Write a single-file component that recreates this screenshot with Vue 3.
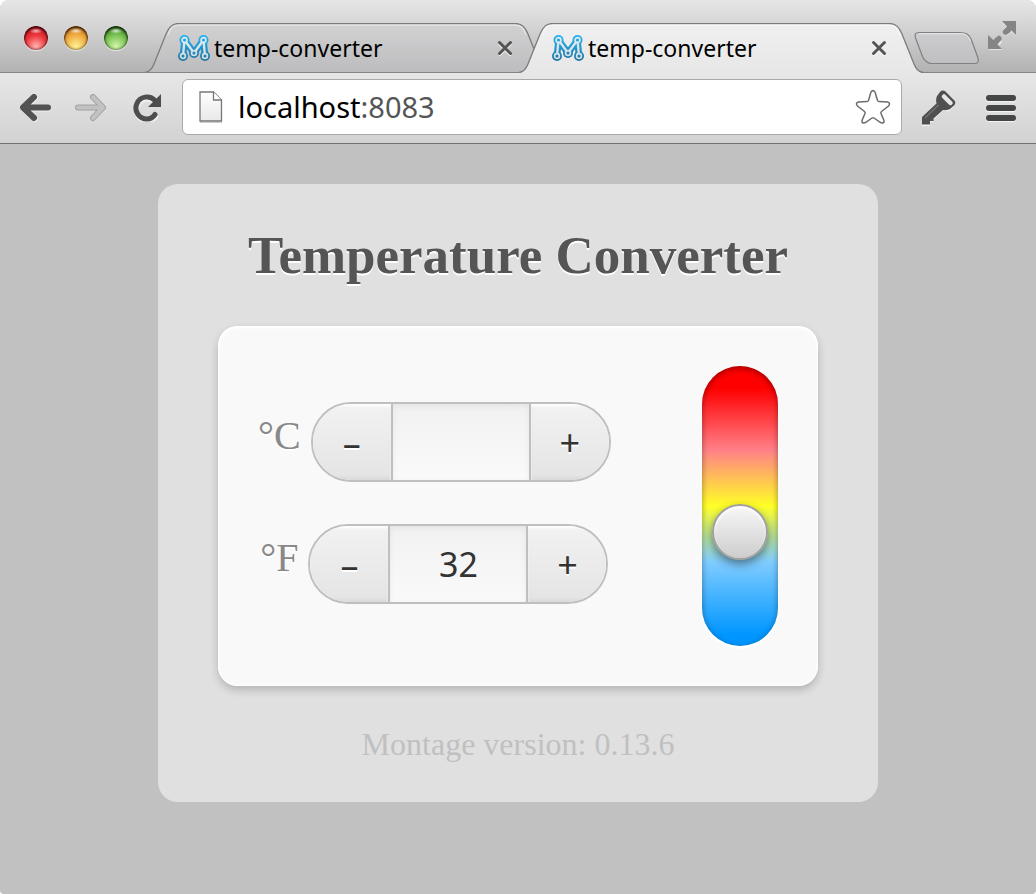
<script setup>
import { computed, ref } from 'vue'

const tabs = ref([
  { id: 1, title: 'temp-converter', active: false },
  { id: 2, title: 'temp-converter', active: true },
])
const address = { host: 'localhost', port: ':8083' }

const fahrenheit = ref(32)
const celsius = computed(() => Math.round(((fahrenheit.value - 32) * 5) / 9))

function setFahrenheit(value) {
  fahrenheit.value = Math.round(Number(value) || 0)
}
function setCelsius(value) {
  setFahrenheit(((Number(value) || 0) * 9) / 5 + 32)
}
function select(id) {
  tabs.value.forEach((tab) => (tab.active = tab.id === id))
}

const fields = computed(() => [
  { id: 'celsius', label: '°C', value: celsius.value || '', number: celsius.value, set: setCelsius },
  { id: 'fahrenheit', label: '°F', value: fahrenheit.value, number: fahrenheit.value, set: setFahrenheit },
])
</script>

<template>
  <div class="window">
    <header class="titlebar">
      <div class="lights">
        <button class="light red" aria-label="Close window"></button>
        <button class="light amber" aria-label="Minimize window"></button>
        <button class="light green" aria-label="Zoom window"></button>
      </div>
      <nav class="tabs">
        <div v-for="tab in tabs" :key="tab.id" class="tab" :class="{ active: tab.active }">
          <svg class="tab-shape" viewBox="0 0 404 50" preserveAspectRatio="none" aria-hidden="true">
            <defs>
              <linearGradient :id="'tabfill' + tab.id" x1="0" y1="0" x2="0" y2="1">
                <stop offset="0" :stop-color="tab.active ? '#f0f0f0' : '#d2d2d3'" />
                <stop offset="1" :stop-color="tab.active ? '#e7e7e7' : '#bcbcbe'" />
              </linearGradient>
            </defs>
            <path
              d="M0 50C5 49 7 46 9 41L21 11C24 4 27 .5 34 .5H370C377 .5 380 4 383 11L395 41C397 46 399 49 404 50Z"
              :fill="`url(#tabfill${tab.id})`"
            />
            <path
              d="M0 49.5C5 49 7 46 9 41L21 11C24 4 27 .5 34 .5H370C377 .5 380 4 383 11L395 41C397 46 399 49 404 49.5"
              fill="none" stroke="#7c7c7c" stroke-width="1.3"
            />
            <path d="M23 12C26 5 28 2 34 2H370C376 2 378 5 381 12" fill="none" stroke="#fff" stroke-opacity=".65" />
            <path v-if="!tab.active" d="M0 49.5H404" stroke="#858585" />
          </svg>
          <button class="tab-title" @click="select(tab.id)">
            <svg class="favicon" viewBox="0 0 32 26" aria-hidden="true">
              <defs>
                <linearGradient :id="'logo' + tab.id" x1="0" y1="0" x2="0" y2="26" gradientUnits="userSpaceOnUse">
                  <stop offset="0" stop-color="#25b4f2" />
                  <stop offset="1" stop-color="#20739f" />
                </linearGradient>
                <linearGradient :id="'gap' + tab.id" x1="0" y1="0" x2="0" y2="26" gradientUnits="userSpaceOnUse">
                  <stop offset="0" stop-color="#e0ecf2" />
                  <stop offset="1" stop-color="#cfdde4" />
                </linearGradient>
              </defs>
              <g :stroke="`url(#logo${tab.id})`" :fill="`url(#logo${tab.id})`" stroke-linejoin="round">
                <path d="M5 21L6.500 5L16 18L25.500 5L27 21" fill="none" stroke-width="6.600" />
                <g stroke="none">
                  <circle cx="5" cy="21" r="5" /><circle cx="6.500" cy="5" r="5" /><circle cx="16" cy="18" r="5" />
                  <circle cx="25.500" cy="5" r="5" /><circle cx="27" cy="21" r="5" />
                </g>
              </g>
              <g :stroke="`url(#gap${tab.id})`" fill="none">
                <path d="M5 21L6.500 5L16 18L25.500 5L27 21" stroke-width="2.400" />
                <g :fill="`url(#logo${tab.id})`" stroke-width="1.700">
                  <circle cx="5" cy="21" r="2.400" /><circle cx="6.500" cy="5" r="2.400" /><circle cx="16" cy="18" r="2.400" />
                  <circle cx="25.500" cy="5" r="2.400" /><circle cx="27" cy="21" r="2.400" />
                </g>
              </g>
            </svg>
            <span>{{ tab.title }}</span>
          </button>
          <button class="tab-close" aria-label="Close tab">
            <svg viewBox="0 0 16 16" width="16" height="16">
              <path d="M3 4.500L13 14.500M13 4.500L3 14.500" stroke="#fff" stroke-opacity=".7" stroke-width="3" stroke-linecap="round" />
              <path d="M2.500 2.500L13.500 13.500M13.500 2.500L2.500 13.500" stroke="#555" stroke-width="3" stroke-linecap="round" />
            </svg>
          </button>
        </div>
        <button class="new-tab" aria-label="New tab">
          <svg viewBox="0 0 66 34" width="66" height="34">
            <defs>
              <linearGradient id="newfill" x1="0" y1="0" x2="0" y2="1">
                <stop offset="0" stop-color="#cdcdcf" /><stop offset="1" stop-color="#bfbfc1" />
              </linearGradient>
            </defs>
            <path d="M5 1.500H46C52 1.500 55 3 57.500 9L64 27C65 31 64 32.500 60 32.500H18C13 32.500 10.500 30 8.500 25.500L1.500 7C.5 3 1 1.500 5 1.500Z" fill="url(#newfill)" stroke="#818181" stroke-width="1.200" />
            <path d="M5 2.700H46C51 2.700 54 4 56.500 10" fill="none" stroke="#e8e8e8" />
          </svg>
        </button>
      </nav>
      <button class="fullscreen" aria-label="Enter full screen">
        <svg viewBox="0 0 28 29" width="28" height="29">
          <path d="M1 15V29H14.500L10.500 24.500Q14.500 23 14 18Q11 14 6.500 19.500ZM14 1H28V15L23.500 11Q20 16 15.500 13Q13 9 18 5.500Z" fill="#e4e4e4" />
          <path d="M0 14V28H14L9.500 23.500Q11 21 13.500 19Q14.500 15.500 11 14.500Q9 15 5.500 19ZM14 0H28V14L23.500 9.500Q21 13 18 14Q13.500 13 15 9.500Q16.500 8 19 5.500Z" fill="#858585" />
        </svg>
      </button>
    </header>

    <div class="toolbar">
      <button class="tool back" aria-label="Back">
        <svg viewBox="0 0 32 28" width="32" height="28">
          <path d="M14.500 4L3.500 14.500L14.500 25M4 14.500H28" class="glow" />
          <path d="M14 3L3 13.500L14 24M4 13.500H28" class="arrow" />
        </svg>
      </button>
      <button class="tool forward" aria-label="Forward" disabled>
        <svg viewBox="0 0 32 28" width="32" height="28">
          <path d="M18 3L28 13.500L18 24M3 13.500H27" class="arrow rim" />
          <path d="M18 3L28 13.500L18 24M3 13.500H27" class="arrow pale" />
        </svg>
      </button>
      <button class="tool reload" aria-label="Reload">
        <svg viewBox="0 0 30 28" width="30" height="28">
          <path d="M22.500 22Q19 26 14 26A11 11 0 1 1 22 7" transform="translate(0 1)" class="ring light-ring" />
          <path d="M22 20.500Q19 25 14 25A11 11 0 1 1 22 6.500" class="ring" />
          <path d="M28 0V13H15Z" fill="#4d4d4d" />
        </svg>
      </button>
      <div class="address">
        <svg class="page-icon" viewBox="0 0 24 32" width="24" height="32" aria-hidden="true">
          <defs>
            <linearGradient id="sheet" x1="0" y1="0" x2="0" y2="1">
              <stop offset="0" stop-color="#fff" /><stop offset="1" stop-color="#e8e8e8" />
            </linearGradient>
          </defs>
          <path d="M1 31.500H23" stroke="#ccc" />
          <path d="M1 1H14.500L22.500 9V30H1Z" fill="url(#sheet)" stroke="#777" stroke-width="1.300" />
          <path d="M14.500 1V9H22.500" fill="#fff" stroke="#777" stroke-width="1.300" />
        </svg>
        <a class="url" href="#">{{ address.host }}<span>{{ address.port }}</span></a>
        <button class="star" aria-label="Bookmark this page">
          <svg viewBox="0 0 36 36" width="36" height="36">
            <path d="M15.800 3.500Q18 -.5 20.200 3.500L22.500 11.500Q23 12.500 24 12.500L32.500 13Q36 14 33.500 17L26.500 22.500Q25.500 23.300 26 24.500L29 31.500Q29.500 35 25.500 33.500L19 29Q18 28.300 17 29L10.500 33.500Q6.500 35 7 31.500L10 24.500Q10.500 23.300 9.500 22.500L2.500 17Q0 14 3.500 13L12 12.500Q13 12.500 13.500 11.500Z" fill="#fff" stroke="#6c6c6c" stroke-width="1.500" />
          </svg>
        </button>
      </div>
      <button class="tool key" aria-label="Passwords">
        <svg viewBox="0 0 36 36" width="36" height="36">
          <path d="M20 3Q22 0 25 2L34 10Q36 13 33 16L29 20.500Q27 22 22 20.500L12 30V32H9V36H1V28L16 14Q14.500 10 17 7Z" fill="#f2f2f2" />
          <path d="M19 2Q21.500 -.5 24.500 1.500L33.500 10.500Q35.500 13 33 15.500L29 19Q27 20.500 22 20L12.500 28.500V31H9V34.500H1V27L15.500 13.500Q14.500 9 16 6Z" fill="#505050" />
          <path d="M23 6.500L29.500 13" stroke="#e6e6e6" stroke-width="4.500" stroke-linecap="round" />
          <path d="M4 28L17.500 15" stroke="#757575" stroke-width="1.200" />
        </svg>
      </button>
      <button class="tool menu" aria-label="Menu">
        <span></span><span></span><span></span>
      </button>
    </div>

    <main class="page">
      <section class="panel">
        <h1>Temperature Converter</h1>
        <div class="card">
          <div class="fields">
            <div v-for="field in fields" :key="field.id" class="field">
              <label :for="field.id">{{ field.label }}</label>
              <div class="stepper">
                <button :aria-label="'Decrease ' + field.label" @click="field.set(field.number - 1)">–</button>
                <input :id="field.id" type="text" inputmode="numeric" :value="field.value" @change="field.set($event.target.value)" />
                <button :aria-label="'Increase ' + field.label" @click="field.set(field.number + 1)">+</button>
              </div>
            </div>
          </div>
          <input v-model.number="fahrenheit" class="thermometer" type="range" min="-40" max="154" aria-label="Temperature" />
        </div>
        <p class="version">Montage version: 0.13.6</p>
      </section>
    </main>
  </div>
</template>

<style>
body {
  background: #fff;
}
</style>

<style scoped>
.window {
  min-height: 100vh;
  display: flex;
  flex-direction: column;
  overflow: hidden;
  border-radius: 9px 9px 4px 4px;
  background: #c1c1c1;
  font-family: "Noto Sans", "Open Sans", sans-serif;
}
button {
  padding: 0;
  border: 0;
  background: none;
  color: inherit;
  font: inherit;
}
svg {
  display: block;
}
.titlebar {
  display: flex;
  height: 72px;
  border-bottom: 1px solid #858585;
  background: linear-gradient(#e6e6e6, #dadada 25%, #b2b2b2);
}
.lights {
  display: flex;
  gap: 16px;
  padding: 26px 17px 0 24px;
}
.light {
  width: 24px;
  height: 24px;
  border-radius: 50%;
  box-shadow: inset 0 2px 3px rgba(0, 0, 0, 0.65), inset 0 0 2px 1px rgba(0, 0, 0, 0.4), 0 1px 1px #e8e8e8;
}
.red {
  background: radial-gradient(ellipse 7px 3px at 50% 20%, rgba(255, 255, 255, 0.7), transparent), radial-gradient(circle at 50% 85%, #ffb3b0, #ee3b3f 45%, #cf1722 75%);
}
.amber {
  background: radial-gradient(ellipse 7px 3px at 50% 20%, rgba(255, 255, 255, 0.8), transparent), radial-gradient(circle at 50% 85%, #fff294, #efaa40 50%, #d17b17 80%);
}
.green {
  background: radial-gradient(ellipse 7px 3px at 50% 20%, rgba(255, 255, 255, 0.8), transparent), radial-gradient(circle at 50% 85%, #d3f7aa, #76c150 50%, #3f8a25 80%);
}
.tabs {
  flex: 1;
  display: flex;
  align-items: flex-end;
  min-width: 0;
}
.tab {
  position: relative;
  flex: 0 1 404px;
  min-width: 0;
  height: 50px;
  margin-bottom: -1px;
  display: flex;
  align-items: center;
  justify-content: space-between;
}
.tab + .tab {
  margin-left: -30px;
}
.tab.active {
  z-index: 1;
}
.tab-shape {
  position: absolute;
  inset: 0;
  width: 100%;
  height: 100%;
}
.tab-title {
  position: relative;
  display: flex;
  align-items: center;
  gap: 4px;
  padding-left: 33px;
  color: #000;
  font-size: 23px;
  line-height: 32px;
  white-space: nowrap;
}
.favicon {
  width: 32px;
  height: 26px;
}
.tab-close {
  position: relative;
  margin-right: 36px;
}
.new-tab {
  flex: none;
  margin: 0 0 7px -9px;
}
.fullscreen {
  flex: none;
  align-self: flex-start;
  margin: 21px 20px 0 8px;
}
.toolbar {
  display: flex;
  align-items: center;
  height: 70px;
  padding: 0 20px;
  border-bottom: 1px solid #707070;
  background: linear-gradient(#e7e7e7, #d2d2d2);
}
.tool {
  flex: none;
}
.forward {
  margin-left: 23px;
}
.reload {
  margin: 0 19px 0 26px;
}
.arrow,
.glow {
  fill: none;
  stroke: #535353;
  stroke-width: 6;
  stroke-linecap: round;
  stroke-linejoin: round;
}
.glow {
  stroke: #f2f2f2;
}
.rim {
  stroke: #a2a2a2;
}
.pale {
  stroke: #c2c2c2;
  stroke-width: 4;
}
.ring {
  fill: none;
  stroke: #4d4d4d;
  stroke-width: 5;
  stroke-linecap: round;
}
.light-ring {
  stroke: #f0f0f0;
}
.address {
  flex: 1;
  min-width: 0;
  display: flex;
  align-items: center;
  height: 54px;
  margin-bottom: 2px;
  padding: 0 10px 0 16px;
  border: 1px solid #aaa;
  border-radius: 6px;
  background: #fff;
}
.url {
  flex: 1;
  margin-left: 15px;
  color: #000;
  font-size: 29px;
  line-height: 40px;
  text-decoration: none;
}
.url span {
  color: #555;
}
.key {
  margin: 0 29px 0 19px;
}
.menu {
  display: grid;
  gap: 4px;
  width: 30px;
}
.menu span {
  height: 6px;
  border-radius: 3px;
  background: #454747;
  box-shadow: 0 1px 1px #f6f6f6;
}
.page {
  flex: 1;
  padding: 40px 20px;
  font-family: "Liberation Serif", "Times New Roman", serif;
}
.panel {
  box-sizing: border-box;
  max-width: 720px;
  margin: 0 auto;
  padding: 40px 60px;
  border-radius: 20px;
  background: #e0e0e0;
  text-align: center;
}
h1 {
  margin: 0;
  color: #555;
  font-size: 53px;
  line-height: 62px;
  text-shadow: 0 2px 0 #fff;
}
.card {
  display: flex;
  justify-content: space-between;
  margin-top: 40px;
  padding: 40px;
  border-radius: 20px;
  background: #f9f9f9;
  box-shadow: inset 0 2px 4px #fff, inset 0 0 2px 1px #fff, 0 4px 8px rgba(0, 0, 0, 0.2);
}
.fields {
  display: flex;
  flex-direction: column;
  align-items: center;
  gap: 42px;
  padding-top: 36px;
}
.field {
  display: flex;
  align-items: center;
  gap: 10px;
}
label {
  padding-bottom: 12px;
  color: #888;
  font-size: 40px;
  line-height: 46px;
  text-shadow: 0 2px 0 #fff;
}
.stepper {
  display: flex;
  box-sizing: border-box;
  width: 300px;
  height: 80px;
  overflow: hidden;
  border: 2px solid #bfbfbf;
  border-radius: 40px;
  color: #333;
  font: 34px/40px "Noto Sans", "Open Sans", sans-serif;
}
.stepper button {
  flex: none;
  width: 78px;
  padding-top: 2px;
  background: linear-gradient(#f2f2f2, #e4e4e4);
  box-shadow: inset 0 2px 3px #fff, inset 0 -2px 4px rgba(0, 0, 0, 0.06);
  font-size: 36px;
  text-shadow: 0 2px 0 #fff;
}
.stepper input {
  flex: 1;
  min-width: 0;
  padding: 0;
  border: solid #bfbfbf;
  border-width: 0 2px;
  border-radius: 0;
  background: linear-gradient(#f1f1f1, #fafafa);
  box-shadow: inset 0 2px 6px rgba(0, 0, 0, 0.06);
  color: inherit;
  font: inherit;
  text-align: center;
}
.thermometer {
  appearance: none;
  box-sizing: border-box;
  width: 76px;
  height: 280px;
  margin: 0;
  padding: 10px 0;
  border-radius: 38px;
  background: linear-gradient(#f00 8%, #ff8088 30%, #ffff26 50%, #80ccff 70%, #0096ff 96%);
  box-shadow: inset 0 2px 6px rgba(0, 0, 0, 0.4), 0 3px 2px #fff;
  writing-mode: vertical-lr;
  direction: rtl;
}
.thermometer::-webkit-slider-thumb {
  appearance: none;
  box-sizing: border-box;
  width: 56px;
  height: 56px;
  border: 2px solid #a0a0a0;
  border-radius: 50%;
  background: linear-gradient(#f7f7f7, #cdcdcd);
  box-shadow: inset 0 2px 3px #fff, 0 4px 10px rgba(0, 0, 0, 0.45);
}
.version {
  margin: 40px 0 0;
  color: #c0c0c0;
  font-size: 32px;
  line-height: 36px;
}
</style>
